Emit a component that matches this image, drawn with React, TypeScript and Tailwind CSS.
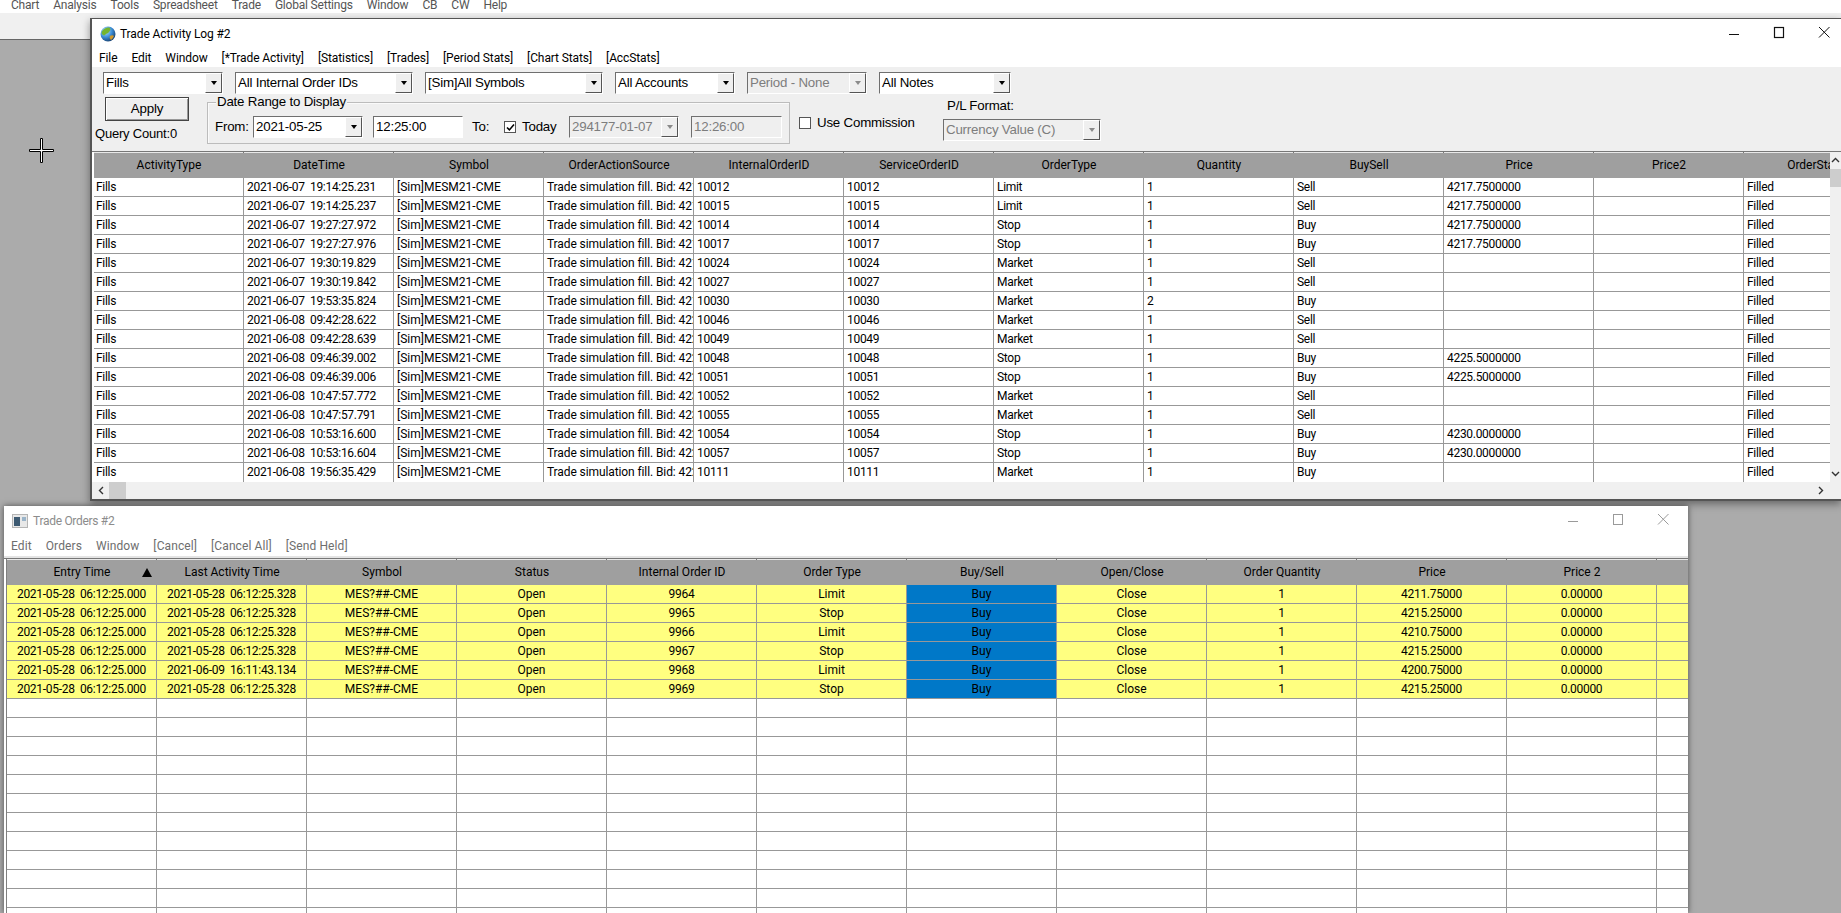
const fontStack = 'font-["Roboto",sans-serif]';

const logCols = ['ActivityType', 'DateTime', 'Symbol', 'OrderActionSource', 'InternalOrderID', 'ServiceOrderID', 'OrderType', 'Quantity', 'BuySell', 'Price', 'Price2', 'OrderStatus'];

const logRows = [
  ['2021-06-07  19:14:25.231', '421', '10012', '10012', 'Limit', '1', 'Sell', '4217.7500000'],
  ['2021-06-07  19:14:25.237', '421', '10015', '10015', 'Limit', '1', 'Sell', '4217.7500000'],
  ['2021-06-07  19:27:27.972', '421', '10014', '10014', 'Stop', '1', 'Buy', '4217.7500000'],
  ['2021-06-07  19:27:27.976', '421', '10017', '10017', 'Stop', '1', 'Buy', '4217.7500000'],
  ['2021-06-07  19:30:19.829', '421', '10024', '10024', 'Market', '1', 'Sell', ''],
  ['2021-06-07  19:30:19.842', '421', '10027', '10027', 'Market', '1', 'Sell', ''],
  ['2021-06-07  19:53:35.824', '421', '10030', '10030', 'Market', '2', 'Buy', ''],
  ['2021-06-08  09:42:28.622', '422', '10046', '10046', 'Market', '1', 'Sell', ''],
  ['2021-06-08  09:42:28.639', '422', '10049', '10049', 'Market', '1', 'Sell', ''],
  ['2021-06-08  09:46:39.002', '422', '10048', '10048', 'Stop', '1', 'Buy', '4225.5000000'],
  ['2021-06-08  09:46:39.006', '422', '10051', '10051', 'Stop', '1', 'Buy', '4225.5000000'],
  ['2021-06-08  10:47:57.772', '423', '10052', '10052', 'Market', '1', 'Sell', ''],
  ['2021-06-08  10:47:57.791', '423', '10055', '10055', 'Market', '1', 'Sell', ''],
  ['2021-06-08  10:53:16.600', '422', '10054', '10054', 'Stop', '1', 'Buy', '4230.0000000'],
  ['2021-06-08  10:53:16.604', '422', '10057', '10057', 'Stop', '1', 'Buy', '4230.0000000'],
  ['2021-06-08  19:56:35.429', '422', '10111', '10111', 'Market', '1', 'Buy', ''],
];

const orderCols = ['Entry Time', 'Last Activity Time', 'Symbol', 'Status', 'Internal Order ID', 'Order Type', 'Buy/Sell', 'Open/Close', 'Order Quantity', 'Price', 'Price 2'];

const orderRows = [
  ['2021-05-28  06:12:25.328', '9964', 'Limit', '4211.75000'],
  ['2021-05-28  06:12:25.328', '9965', 'Stop', '4215.25000'],
  ['2021-05-28  06:12:25.328', '9966', 'Limit', '4210.75000'],
  ['2021-05-28  06:12:25.328', '9967', 'Stop', '4215.25000'],
  ['2021-06-09  16:11:43.134', '9968', 'Limit', '4200.75000'],
  ['2021-05-28  06:12:25.328', '9969', 'Stop', '4215.25000'],
];

function Cell({ children, className = '' }: { children?: React.ReactNode; className?: string }) {
  return (
    <div className={`w-[150px] h-full shrink-0 border-r border-[#989898] overflow-hidden whitespace-pre leading-[18px] text-[12px] text-black ${className}`}>
      {children}
    </div>
  );
}

function HeaderRow({ cols, children }: { cols: string[]; children?: React.ReactNode }) {
  return (
    <>
      <div className="flex h-[1px] shrink-0 bg-[#e8e8e8]">
        {cols.map((c) => (
          <div key={c} className="w-[150px] h-full shrink-0 border-r border-[#777777]" />
        ))}
      </div>
      <div className="flex h-[25px] shrink-0 bg-[#9f9f9f]">
        {cols.map((c) => (
          <div key={c} className="w-[150px] h-full shrink-0 overflow-hidden whitespace-nowrap text-center leading-[24px] text-[12px] text-black">
            {c}
          </div>
        ))}
        {children}
      </div>
    </>
  );
}

function Combo({ label, w, disabled = false }: { label: string; w: string; disabled?: boolean }) {
  return (
    <div className={`${w} h-[22px] flex items-center shrink-0 border border-t-[#6f6f6f] border-l-[#6f6f6f] border-r-white border-b-white ${disabled ? 'bg-[#efefef]' : 'bg-white'}`}>
      <span className={`flex-1 pl-[2px] text-[13.3px] font-["Liberation_Sans",sans-serif] tracking-[-0.2px] truncate ${disabled ? 'text-[#7d7d7d]' : 'text-black'}`}>{label}</span>
      <div className="w-[17px] h-[20px] flex items-center justify-center bg-[#efefef] border border-t-white border-l-white border-r-[#555555] border-b-[#555555]">
        <div className={`w-0 h-0 border-l-[3.5px] border-r-[3.5px] border-t-[4px] border-l-transparent border-r-transparent ${disabled ? 'border-t-[#8a8a8a]' : 'border-t-black'}`} />
      </div>
    </div>
  );
}

function TextBox({ label, w, disabled = false }: { label: string; w: string; disabled?: boolean }) {
  return (
    <div className={`${w} h-[22px] flex items-center shrink-0 border border-t-[#6f6f6f] border-l-[#6f6f6f] border-r-white border-b-white ${disabled ? 'bg-[#efefef] text-[#7d7d7d]' : 'bg-white text-black'} pl-[2px] text-[13.3px] font-["Liberation_Sans",sans-serif] tracking-[-0.2px]`}>
      {label}
    </div>
  );
}

function WinControls({ faded = false }: { faded?: boolean }) {
  const stroke = faded ? '#9a9a9a' : '#111111';
  return (
    <div className="flex items-center gap-[29px]">
      <svg width="16" height="16" viewBox="0 0 16 16" fill="none" stroke={stroke}><path d="M1 8.5h10" /></svg>
      <svg width="16" height="16" viewBox="0 0 16 16" fill="none" stroke={stroke} strokeWidth={faded ? 1 : 1.2}><rect x="1.5" y="1.5" width="9" height="10" /></svg>
      <svg width="16" height="16" viewBox="0 0 16 16" fill="none" stroke={stroke}><path d="M1 1l10.5 10.5M11.5 1L1 11.5" /></svg>
    </div>
  );
}

function LogWindow() {
  return (
    <div className="absolute left-[90px] top-[18px] right-0 h-[483px] bg-white border-t border-l-2 border-b-2 border-[#555555] shadow-[0_3px_8px_rgba(0,0,0,0.4)] flex flex-col overflow-hidden">
      <div className="h-[29px] shrink-0 flex items-center pl-[8px] pr-[7px] justify-between">
        <div className="flex items-center gap-[4px]">
          <svg width="16" height="16" viewBox="0 0 16 16">
            <defs>
              <radialGradient id="globe" cx="35%" cy="30%" r="75%">
                <stop offset="0%" stopColor="#bfe6ff" />
                <stop offset="55%" stopColor="#3c8ed8" />
                <stop offset="100%" stopColor="#17406f" />
              </radialGradient>
            </defs>
            <circle cx="8" cy="8" r="7.5" fill="url(#globe)" />
            <path d="M3 4c2-2 5-3 7-2 1 1 0 3-1 4-1 2-3 1-4 3-1 1-2 0-3-1-1-1 0-3 1-4z" fill="#74b52f" />
            <path d="M10 10c1-1 3-1 4 0-1 2-2 3-3 4-1-1-2-3-1-4z" fill="#d29a2c" />
          </svg>
          <span className="text-[12px] tracking-[-0.1px] text-black">Trade Activity Log #2</span>
        </div>
        <WinControls />
      </div>
      <div className="h-[19px] shrink-0 flex items-center gap-[14px] pl-[7px] text-[12px] tracking-[-0.1px] text-black">
        <span>File</span><span>Edit</span><span>Window</span>
        <span>[*Trade Activity]</span><span>[Statistics]</span><span>[Trades]</span><span>[Period Stats]</span><span>[Chart Stats]</span><span>[AccStats]</span>
      </div>
      <div className="h-[85px] shrink-0 bg-[#efefef] border-b border-[#777777] pl-[11px] pt-[5px] flex flex-col text-[13.3px] font-['Liberation_Sans',sans-serif] tracking-[-0.2px] text-black">
        <div className="flex gap-[12px]">
          <Combo label="Fills" w="w-[120px]" />
          <Combo label="All Internal Order IDs" w="w-[178px]" />
          <Combo label="[Sim]All Symbols" w="w-[178px]" />
          <Combo label="All Accounts" w="w-[120px]" />
          <Combo label="Period - None" w="w-[120px]" disabled />
          <Combo label="All Notes" w="w-[132px]" />
        </div>
        <div className="flex mt-[3px]">
          <div className="w-[104px] shrink-0 flex flex-col">
            <div className="ml-[2px] w-[84px] h-[24px] flex items-center justify-center bg-[#efefef] border border-[#444444] shadow-[inset_1px_1px_0_#ffffff,inset_-1px_-1px_0_#999999]">Apply</div>
            <div className="mt-[5px] -ml-[8px] text-[13px] leading-[16px] whitespace-nowrap">Query Count:0</div>
          </div>
          <div className="relative w-[583px] h-[42px] mt-[5px] shrink-0 border border-[#bcbcbc] flex items-center pt-[8px] pl-[7px] shadow-[inset_1px_1px_0_#fafafa]">
            <span className="absolute left-[8px] -top-[9px] bg-[#efefef] px-[1px] leading-[16px]">Date Range to Display</span>
            <span className="w-[38px]">From:</span>
            <Combo label="2021-05-25" w="w-[110px]" />
            <div className="w-[10px]" />
            <TextBox label="12:25:00" w="w-[90px]" />
            <span className="ml-[9px] w-[32px]">To:</span>
            <div className="w-[12px] h-[12px] bg-white border border-[#555555] flex items-center justify-center">
              <svg width="9" height="9" viewBox="0 0 9 9" fill="none" stroke="#000000" strokeWidth="1.6"><path d="M1 4.5l2.4 2.4L8 1.5" /></svg>
            </div>
            <span className="ml-[6px] w-[47px]">Today</span>
            <Combo label="294177-01-07" w="w-[110px]" disabled />
            <div className="w-[12px]" />
            <TextBox label="12:26:00" w="w-[91px]" disabled />
          </div>
          <div className="ml-[9px] mt-[20px] flex items-center gap-[6px] w-[144px] h-[12px] shrink-0">
            <div className="w-[12px] h-[12px] bg-white border border-[#555555]" />
            <span>Use Commission</span>
          </div>
          <div className="flex flex-col mt-[1px]">
            <span className="ml-[4px] leading-[16px]">P/L Format:</span>
            <div className="mt-[5px]"><Combo label="Currency Value (C)" w="w-[158px]" disabled /></div>
          </div>
        </div>
      </div>
      <div className="flex-1 min-h-0 relative flex flex-col overflow-hidden pl-[2px]">
        <div className="flex-1 min-h-0 overflow-hidden pr-[10px]">
          <HeaderRow cols={logCols} />
          {logRows.map((r) => (
            <div key={r[0]} className="flex h-[19px] border-b border-[#989898] last:border-b-0 bg-white tracking-[-0.3px]">
              <Cell className="pl-[2px]">Fills</Cell>
              <Cell className="pl-[3px]">{r[0]}</Cell>
              <Cell className="pl-[3px] tracking-[0px]">[Sim]MESM21-CME</Cell>
              <Cell className="pl-[3px] tracking-[-0.1px]">{`Trade simulation fill. Bid: ${r[1]}`}</Cell>
              <Cell className="pl-[3px]">{r[2]}</Cell>
              <Cell className="pl-[3px]">{r[3]}</Cell>
              <Cell className="pl-[3px]">{r[4]}</Cell>
              <Cell className="pl-[3px]">{r[5]}</Cell>
              <Cell className="pl-[3px]">{r[6]}</Cell>
              <Cell className="pl-[3px]">{r[7]}</Cell>
              <Cell />
              <Cell className="pl-[3px]">Filled</Cell>
            </div>
          ))}
        </div>
        <div className="absolute top-0 right-0 w-[11px] h-[330px] bg-[#f0f0f0] flex flex-col items-center">
          <svg width="11" height="17" viewBox="0 0 11 17" fill="none" stroke="#333333" strokeWidth="1.4"><path d="M2 10l3.5-3.5L9 10" /></svg>
          <div className="w-full h-[18px] bg-[#cdcdcd]" />
          <div className="flex-1" />
          <svg width="11" height="17" viewBox="0 0 11 17" fill="none" stroke="#333333" strokeWidth="1.4"><path d="M2 7l3.5 3.5L9 7" /></svg>
        </div>
        <div className="h-[17px] shrink-0 -ml-[2px] bg-[#f0f0f0] flex items-center relative">
          <svg width="17" height="17" viewBox="0 0 17 17" fill="none" stroke="#333333" strokeWidth="1.4"><path d="M11 5L7.5 8.5 11 12" /></svg>
          <div className="w-[17px] h-[17px] bg-[#cdcdcd]" />
          <div className="flex-1" />
          <svg width="17" height="17" viewBox="0 0 17 17" fill="none" stroke="#333333" strokeWidth="1.4"><path d="M6 5l3.5 3.5L6 12" /></svg>
          <div className="w-[11px]" />
        </div>
      </div>
    </div>
  );
}

function OrdersWindow() {
  const blanks = Array.from({ length: 12 }, (_, i) => i);
  return (
    <div className="absolute left-[4px] top-[506px] w-[1684px] h-[407px] bg-white shadow-[0_0_6px_rgba(0,0,0,0.55)] flex flex-col overflow-hidden">
      <div className="h-[30px] shrink-0 flex items-center justify-between pl-[8px] pr-[15px]">
        <div className="flex items-center gap-[5px]">
          <svg width="16" height="16" viewBox="0 0 16 16">
            <rect x="0.5" y="1.5" width="15" height="13" fill="#e8e8e8" stroke="#b5b5b5" />
            <rect x="2" y="4" width="6" height="9" fill="#3d5a72" />
            <rect x="10" y="4" width="4" height="4" fill="#9ab4c9" />
          </svg>
          <span className="text-[12px] tracking-[-0.3px] text-[#8c8c8c]">Trade Orders #2</span>
        </div>
        <WinControls faded />
      </div>
      <div className="h-[20px] shrink-0 flex items-center gap-[14px] pl-[7px] text-[12px] tracking-[0.1px] text-[#6e6e6e]">
        <span>Edit</span><span>Orders</span><span>Window</span><span>[Cancel]</span><span>[Cancel All]</span><span>[Send Held]</span>
      </div>
      <div className="h-[3px] shrink-0 bg-[#e4e4e4] border-b border-[#777777]" />
      <div className="flex-1 min-h-0 ml-[2px] border-l border-[#808080]">
        <HeaderRow cols={orderCols}>
          <div className="flex-1" />
        </HeaderRow>
        <div className="relative">
          <div className="absolute left-[135px] -top-[17px] w-0 h-0 border-l-[5px] border-r-[5px] border-b-[9px] border-l-transparent border-r-transparent border-b-black" />
        </div>
        {orderRows.map((r, i) => (
          <div key={i} className="flex h-[19px] border-b border-[#989898] bg-[#ffff80] text-center tracking-[-0.3px]">
            <Cell>2021-05-28  06:12:25.000</Cell>
            <Cell>{r[0]}</Cell>
            <Cell className="tracking-[0px]">MES?##-CME</Cell>
            <Cell className="tracking-[0px]">Open</Cell>
            <Cell>{r[1]}</Cell>
            <Cell className="tracking-[0px]">{r[2]}</Cell>
            <Cell className="bg-[#0078c8] tracking-[0px]">Buy</Cell>
            <Cell className="tracking-[0px]">Close</Cell>
            <Cell>1</Cell>
            <Cell>{r[3]}</Cell>
            <Cell>0.00000</Cell>
          </div>
        ))}
        {blanks.map((i) => (
          <div key={i} className="flex h-[19px] border-b border-[#989898] bg-white">
            {orderCols.map((c) => <Cell key={c} />)}
          </div>
        ))}
      </div>
    </div>
  );
}

export default function App() {
  return (
    <div className={`relative w-[1841px] h-[913px] overflow-hidden bg-[#ababab] ${fontStack}`}>
      <div className="h-[13px] bg-white flex items-start gap-[14px] pl-[11px] text-[12px] leading-[10px] tracking-[-0.2px] text-[#555555] overflow-hidden">
        <span>Chart</span><span>Analysis</span><span>Tools</span><span>Spreadsheet</span><span>Trade</span><span>Global Settings</span><span>Window</span><span>CB</span><span>CW</span><span>Help</span>
      </div>
      <div className="h-[27px] bg-[#f0f0f0] border-b border-[#666666]" />
      <svg className="absolute left-[29px] top-[138px]" width="25" height="25" viewBox="0 0 25 25" fill="#ffffff" stroke="#000000">
        <path d="M11.5 0.5h2v11h11v2h-11v11h-2v-11h-11v-2h11z" />
      </svg>
      <LogWindow />
      <OrdersWindow />
    </div>
  );
}
